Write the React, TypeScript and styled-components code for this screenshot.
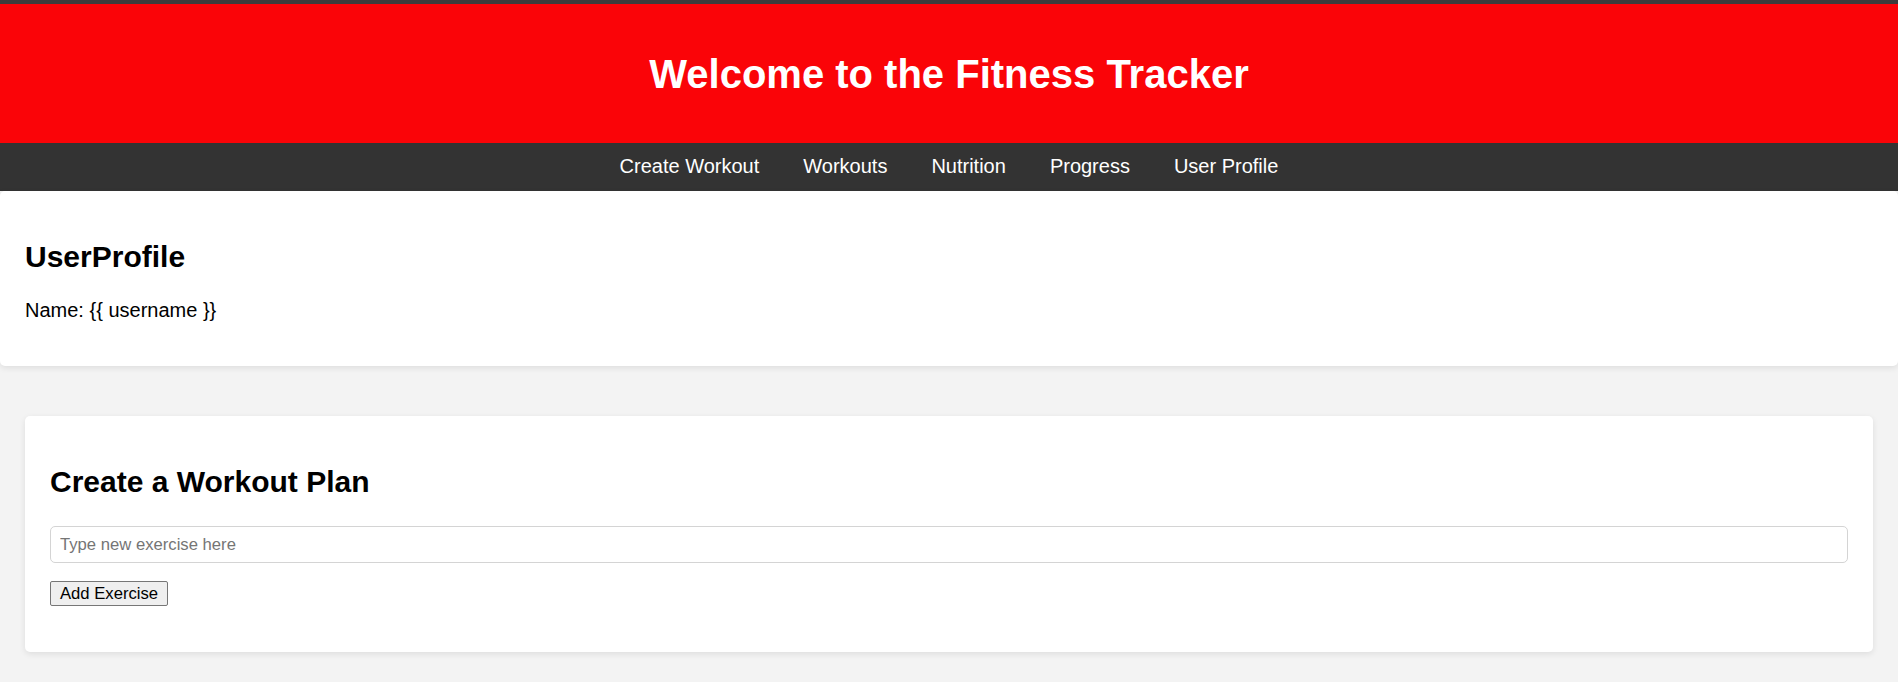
import React from "react";
import styled, { createGlobalStyle } from "styled-components";

const GlobalStyle = createGlobalStyle`
  html, body {
    margin: 0;
    padding: 0;
    background: #f3f3f3;
    font-family: "Liberation Sans", Arial, Helvetica, sans-serif;
  }
  * { box-sizing: border-box; }
`;

const Page = styled.div`
  min-height: 682px;
  background: #f3f3f3;
  display: flex;
  flex-direction: column;
`;

const Header = styled.header`
  background: #fa0408;
  border-top: 4px solid #3c3c3c;
  padding: 20px;
  text-align: center;
`;

const Title = styled.h1`
  margin: 27px 0 26px;
  font-size: 40px;
  line-height: 46px;
  font-weight: 700;
  color: #ffffff;
`;

const Nav = styled.nav`
  background: #333333;
  padding: 11.5px 0 13.5px;
  display: flex;
  justify-content: center;
  gap: 44px;
`;

const NavLink = styled.a`
  color: #ffffff;
  font-size: 20px;
  line-height: 23px;
  text-decoration: none;
  cursor: pointer;
`;

const Card = styled.section<{ $inset?: boolean }>`
  background: #ffffff;
  border-radius: 5px;
  box-shadow: 0 2px 6px rgba(0, 0, 0, 0.09);
  padding: 25px;
  margin: ${(p) => (p.$inset ? "50px 25px 29px" : "0")};
`;

const Heading = styled.h2<{ $gap?: number }>`
  margin: 24px 0 ${(p) => p.$gap ?? 25}px;
  font-size: 30px;
  line-height: 34px;
  font-weight: 700;
  color: #000000;
`;

const Text = styled.p`
  margin: 0 0 19px;
  font-size: 20px;
  line-height: 23px;
  color: #000000;
`;

const Form = styled.div`
  display: flex;
  flex-direction: column;
  align-items: flex-start;
  gap: 18px;
  margin-bottom: 21px;
`;

const Input = styled.input`
  width: 100%;
  height: 37px;
  padding: 8px 9px;
  border: 1px solid #d4d4d4;
  border-radius: 5px;
  font-family: "Liberation Sans", Arial, sans-serif;
  font-size: 16.67px;
  line-height: 19px;
  color: #000;
  background: #fff;
  outline: none;
  &::placeholder {
    color: #757575;
  }
`;

const Button = styled.button`
  height: 25px;
  padding: 0 9px;
  border: 1px solid #767676;
  border-radius: 2px;
  background: #efefef;
  font-family: "Liberation Sans", Arial, sans-serif;
  font-size: 16.67px;
  line-height: 19px;
  color: #000;
  cursor: pointer;
`;

const navItems = ["Create Workout", "Workouts", "Nutrition", "Progress", "User Profile"];

export default function App() {
  return (
    <Page>
      <GlobalStyle />
      <Header>
        <Title>Welcome to the Fitness Tracker</Title>
      </Header>
      <Nav>
        {navItems.map((item) => (
          <NavLink key={item}>{item}</NavLink>
        ))}
      </Nav>
      <Card>
        <Heading>UserProfile</Heading>
        <Text>Name: {"{{ username }}"}</Text>
      </Card>
      <Card $inset>
        <Heading $gap={27}>Create a Workout Plan</Heading>
        <Form>
          <Input type="text" placeholder="Type new exercise here" />
          <Button type="button">Add Exercise</Button>
        </Form>
      </Card>
    </Page>
  );
}
